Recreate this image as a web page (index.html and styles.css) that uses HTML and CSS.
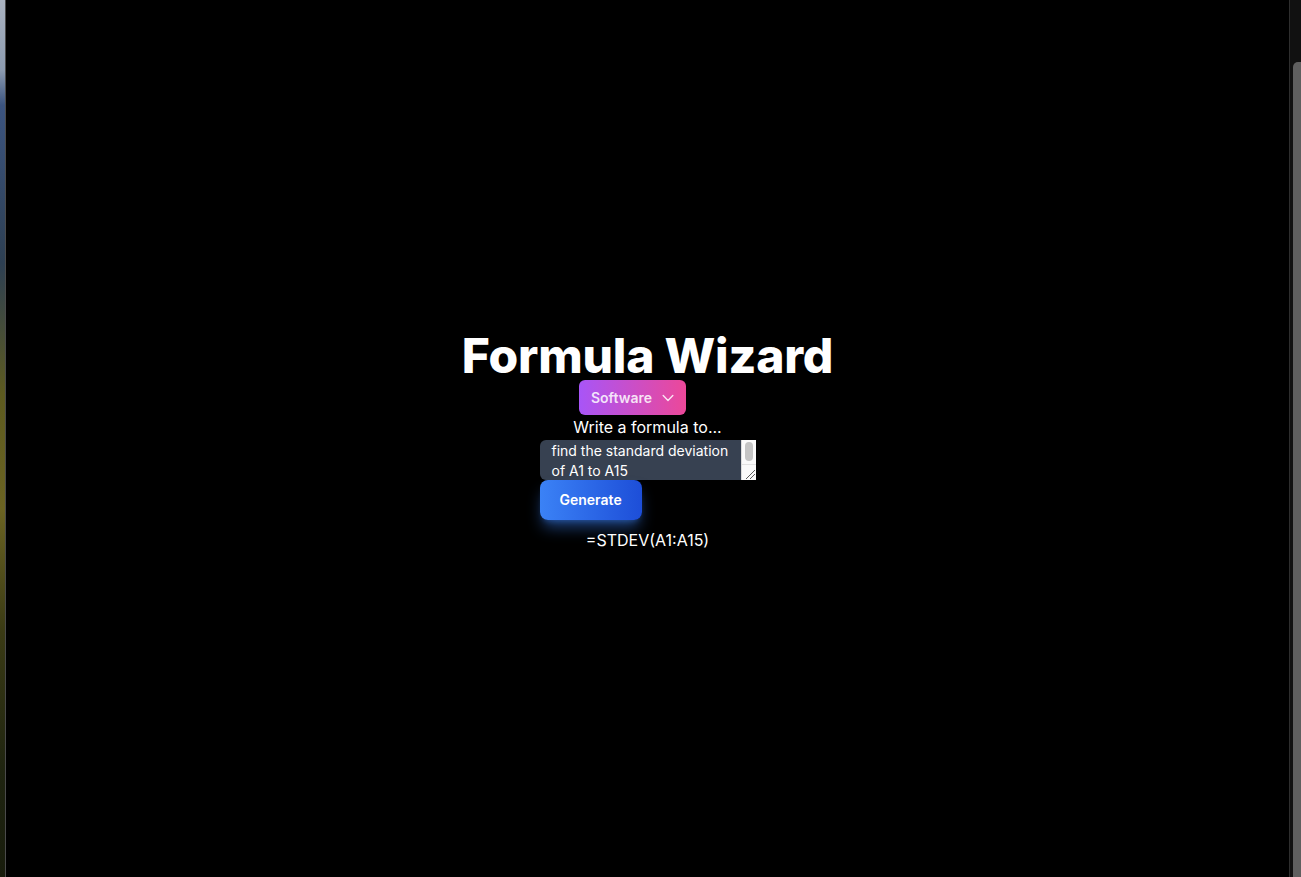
FILE: index.html
```html
<!DOCTYPE html>
<html lang="en">
<head>
    <meta charset="UTF-8">
    <meta name="viewport" content="width=device-width, initial-scale=1.0">
    <title>Formula Wizard</title>
    <link rel="stylesheet" href="styles.css">
</head>
<body>
    <div class="screen">
        <div class="wallpaper"></div>

        <main class="app">
            <h1 class="title">Formula Wizard</h1>

            <button class="software-btn" type="button">
                Software
                <svg class="chevron" width="16" height="16" viewBox="0 0 20 20" fill="none">
                    <path d="M4 7l6 6 6-6" stroke="currentColor" stroke-width="1.8" stroke-linecap="round" stroke-linejoin="round"/>
                </svg>
            </button>

            <label class="prompt-label" for="prompt">Write a formula to...</label>

            <form class="prompt-form">
                <div class="input-wrap">
                    <textarea id="prompt" class="prompt-input" rows="2">find the standard deviation of A1 to A15</textarea>
                    <div class="input-scroll">
                        <div class="input-thumb"></div>
                        <div class="input-grip">
                            <svg width="14" height="15" viewBox="0 0 14 15">
                                <path d="M13 5L4 14M13 9L8 14" stroke="#5c5c5c" stroke-width="1" fill="none"/>
                            </svg>
                        </div>
                    </div>
                </div>
                <button class="generate-btn" type="submit">Generate</button>
            </form>

            <p class="result">=STDEV(A1:A15)</p>
        </main>

        <div class="scrollbar">
            <div class="scrollbar-thumb"></div>
        </div>
    </div>
</body>
</html>
```

FILE: styles.css
```css
html, body {
    margin: 0;
    padding: 0;
    height: 100%;
    background: #000;
    overflow: hidden;
}
body {
    font-family: Inter, "Noto Sans", sans-serif;
    color: #fff;
}
.screen {
    display: flex;
    height: 100vh;
}
.wallpaper {
    width: 5px;
    flex-shrink: 0;
    border-right: 1px solid #4a4a4a;
    background: linear-gradient(180deg, #aab3c0 0%, #8c9bb0 8%, #3b5480 12%, #2d3f52 30%, #5d5a1f 45%, #6b6322 58%, #3a3a14 72%, #1f2410 88%, #181c0c 100%);
}
.app {
    flex: 1;
    display: flex;
    flex-direction: column;
    align-items: center;
    justify-content: center;
    padding-top: 7px;
}
.title {
    margin: 0;
    font-size: 48px;
    line-height: 1;
    font-weight: 800;
    letter-spacing: -0.2px;
}
.software-btn {
    display: flex;
    align-items: center;
    gap: 8px;
    margin-right: 30px;
    padding: 8px 10px 8px 12px;
    border: none;
    border-radius: 6px;
    background: linear-gradient(90deg, #a855f7, #ec4899);
    color: rgba(255, 255, 255, 0.85);
    font-family: Inter, sans-serif;
    font-size: 14px;
    line-height: 19px;
    font-weight: 600;
    cursor: pointer;
}
.chevron {
    display: block;
}
.prompt-label {
    font-size: 16px;
    line-height: 25px;
}
.prompt-form {
    display: flex;
    flex-direction: column;
    align-items: flex-start;
    width: 216px;
}
.input-wrap {
    display: flex;
    width: 216px;
    height: 40px;
    background: #374151;
    border-radius: 6px 0 0 6px;
    overflow: hidden;
}
.prompt-input {
    flex: 1;
    min-width: 0;
    margin: 0;
    padding: 1px 2px 0 12px;
    border: none;
    background: transparent;
    color: #fff;
    font-family: Inter, sans-serif;
    font-size: 14px;
    line-height: 20px;
    resize: none;
    overflow: hidden;
    outline: none;
}
.input-scroll {
    width: 14px;
    display: flex;
    flex-direction: column;
    background: #fafafa;
    border-left: 1px solid #dcdcdc;
}
.input-thumb {
    height: 19px;
    margin: 2px 3px 0;
    border-radius: 5px;
    background: #c4c4c4;
}
.input-grip {
    margin-top: auto;
    height: 15px;
    border-top: 1px solid #e2e2e2;
    display: flex;
    justify-content: flex-end;
}
.generate-btn {
    padding: 10px 20px;
    border: none;
    border-radius: 8px;
    background: linear-gradient(90deg, #3b82f6, #1d4ed8);
    color: #fff;
    font-family: Inter, sans-serif;
    font-size: 14px;
    line-height: 20px;
    font-weight: 600;
    box-shadow: 0 10px 15px -3px rgba(59, 130, 246, 0.5), 0 4px 6px -4px rgba(59, 130, 246, 0.5);
    cursor: pointer;
}
.result {
    margin: 8px 0 0;
    font-size: 16px;
    line-height: 24px;
}
.scrollbar {
    width: 11px;
    flex-shrink: 0;
    border-left: 1px solid #2e2e2e;
    background: #111;
    display: flex;
    flex-direction: column;
    justify-content: flex-end;
}
.scrollbar-thumb {
    height: 815px;
    margin-left: 3px;
    border-radius: 5px 0 0 0;
    background: #5f5f5f;
}
```
